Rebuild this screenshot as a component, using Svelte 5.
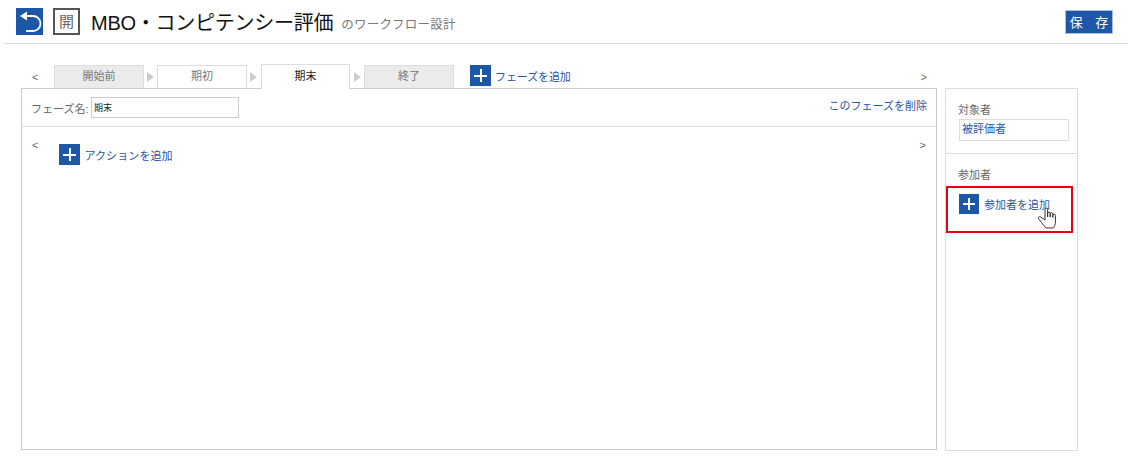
<script>
    const phases = [
        { name: "開始前", kind: "off" },
        { name: "期初", kind: "on" },
        { name: "期末", kind: "current" },
        { name: "終了", kind: "off" }
    ];
</script>

<div class="page">
    <header class="top">
        <button class="back" type="button" aria-label="戻る">
            <svg width="27" height="27" viewBox="0 0 27 27">
                <path d="M10 8 H17 A7.500 7.500 0 0 1 17 23 H10" fill="none" stroke="#fff" stroke-width="1.800" />
                <path d="M4 8 L11 3.500 V12.500 Z" fill="#fff" />
            </svg>
        </button>
        <span class="badge">開</span>
        <h1>MBO・コンピテンシー評価</h1>
        <span class="sub">のワークフロー設計</span>
        <button class="save" type="button">保 存</button>
    </header>

    <div class="work">
        <div class="left">
            <div class="tabbar">
                <span class="chev first">&lt;</span>
                {#each phases as p, i}
                    {#if i > 0}
                        <span class="sep"></span>
                    {/if}
                    <div class="tab {p.kind}">{p.name}</div>
                {/each}
                <button class="add add-phase" type="button">
                    <span class="plus big"></span>フェーズを追加
                </button>
                <span class="chev last">&gt;</span>
            </div>
            <div class="panel">
                <div class="phase-row">
                    <label for="phase">フェーズ名:</label>
                    <input id="phase" value="期末" />
                    <a href="#delete">このフェーズを削除</a>
                </div>
                <div class="actions">
                    <span class="chev">&lt;</span>
                    <button class="add add-action" type="button">
                        <span class="plus big"></span>アクションを追加
                    </button>
                    <span class="chev end">&gt;</span>
                </div>
            </div>
        </div>

        <aside class="side">
            <div class="target">
                <div class="lbl">対象者</div>
                <div class="box">被評価者</div>
            </div>
            <div class="members">
                <div class="lbl">参加者</div>
                <div class="mark">
                    <button class="add add-member" type="button">
                        <span class="plus"></span>参加者を追加
                    </button>
                    <svg class="hand" width="21" height="22" viewBox="0 0 21 22">
                        <path d="M8 13 V2.500 a1.300 1.300 0 0 1 2.600 0 V10 V6.500 a1.300 1.300 0 0 1 2.600 0 V10 V7 a1.300 1.300 0 0 1 2.600 0 V10.500 V8.500 a1.300 1.300 0 0 1 2.600 0 V15 c0 2.500 -1 4.500 -2 6 H9 c-1.500 -1.500 -3 -3.500 -4.500 -5.500 L1.500 11.500 c-0.800 -1.300 0.800 -2.500 2.200 -1.500 Z" fill="#fff" stroke="#333" stroke-width="1" stroke-linejoin="round" />
                    </svg>
                </div>
            </div>
        </aside>
    </div>
</div>

<style>
    :global(body) {
        background: #fff;
    }

    .page {
        width: 1128px;
        height: 460px;
        overflow: hidden;
        font-family: "Liberation Sans", "Noto Sans CJK JP", sans-serif;
        color: #666;
    }

    button {
        font-family: inherit;
        border: 0;
        padding: 0;
        background: none;
        cursor: pointer;
    }

    .top {
        display: flex;
        align-items: center;
        height: 43px;
        margin-left: 4px;
        padding: 0 15px 0 12px;
        border-bottom: 1px solid #ddd;
    }

    .back {
        width: 27px;
        height: 27px;
        background: #1c57a8;
    }

    .back svg {
        display: block;
    }

    .badge {
        width: 27px;
        height: 27px;
        box-sizing: border-box;
        border: 2px solid #555;
        margin: 0 11px 0 10px;
        font-size: 15px;
        line-height: 23px;
        text-align: center;
        color: #666;
    }

    h1 {
        margin: 0 8px 0 0;
        font-size: 20px;
        font-weight: 400;
        letter-spacing: -0.250px;
        color: #111;
        white-space: nowrap;
    }

    .sub {
        font-size: 12.500px;
        letter-spacing: 0.200px;
        margin-top: 3px;
        color: #777;
    }

    .save {
        margin-left: auto;
        width: 48px;
        height: 24px;
        box-sizing: border-box;
        border: 1px solid #a9c0e0;
        padding-left: 1px;
        background: #1c57a8;
        color: #fff;
        font-size: 13px;
        letter-spacing: 1px;
        word-spacing: 7px;
    }

    .work {
        display: flex;
        gap: 8px;
        margin: 21px 0 0 21px;
    }

    .left {
        width: 916px;
    }

    .tabbar {
        display: flex;
        align-items: flex-end;
        height: 23px;
        position: relative;
        z-index: 1;
    }

    .chev {
        font-size: 11px;
        color: #666;
    }

    .chev.first {
        width: 33px;
        padding-left: 11px;
        box-sizing: border-box;
        align-self: center;
    }

    .chev.last {
        margin-left: auto;
        margin-right: 10px;
        align-self: center;
    }

    .tab {
        width: 90px;
        height: 23px;
        box-sizing: border-box;
        border: 1px solid #ddd;
        border-bottom: 0;
        font-size: 11px;
        line-height: 21px;
        text-align: center;
        color: #777;
    }

    .tab.off {
        background: #ebebeb;
    }

    .tab.on {
        background: #fff;
    }

    .tab.current {
        background: #fff;
        width: 89px;
        height: 25px;
        margin: 0 1px -1px 1px;
        line-height: 23px;
        color: #222;
    }

    .sep {
        width: 13px;
        height: 23px;
        display: flex;
        align-items: center;
    }

    .sep::after {
        content: "";
        margin-left: 3px;
        border-left: 7px solid #ccc;
        border-top: 5px solid transparent;
        border-bottom: 5px solid transparent;
    }

    .add {
        display: flex;
        align-items: center;
        gap: 4px;
        color: #2a55a5;
        font-size: 11px;
        white-space: nowrap;
    }

    .plus {
        width: 20px;
        height: 20px;
        flex: none;
        background:
            linear-gradient(#fff, #fff) center / 12px 2px no-repeat,
            linear-gradient(#fff, #fff) center / 2px 12px no-repeat,
            #1c57a8;
    }

    .plus.big {
        width: 21px;
        height: 21px;
        background-size: 13px 2px, 2px 13px, auto;
    }

    .add-phase {
        margin: 0 0 2px 16px;
        letter-spacing: -0.100px;
    }

    .panel {
        height: 362px;
        box-sizing: border-box;
        border: 1px solid #ccc;
    }

    .phase-row {
        display: flex;
        align-items: center;
        height: 38px;
        box-sizing: border-box;
        border-bottom: 1px solid #ddd;
        padding: 0 9px;
        font-size: 11px;
    }

    .phase-row label {
        width: 60px;
        white-space: nowrap;
    }

    .phase-row input {
        width: 148px;
        height: 21px;
        box-sizing: border-box;
        border: 1px solid #ccc;
        padding: 0 2px;
        margin: 0;
        font: inherit;
        font-size: 9px;
        color: #222;
        outline: 0;
    }

    .phase-row a {
        margin: -6px 0 0 auto;
        color: #2a55a5;
        text-decoration: none;
    }

    .actions {
        display: flex;
        align-items: flex-start;
        padding: 12px 10px 0 10px;
    }

    .add-action {
        margin: 5px 0 0 21px;
        letter-spacing: 0.100px;
    }

    .chev.end {
        margin-left: auto;
    }

    .side {
        width: 133px;
        height: 363px;
        box-sizing: border-box;
        margin-top: 23px;
        border: 1px solid #ddd;
    }

    .target {
        height: 65px;
        box-sizing: border-box;
        border-bottom: 1px solid #ddd;
        padding: 14px 8px 0 12px;
    }

    .lbl {
        font-size: 11px;
        line-height: 14px;
        color: #666;
    }

    .box {
        height: 22px;
        box-sizing: border-box;
        border: 1px solid #ddd;
        margin: 2px 0 0 1px;
        padding-left: 2px;
        font-size: 11px;
        line-height: 18px;
        color: #2a55a5;
    }

    .members .lbl {
        margin: 14px 0 4px 12px;
    }

    .mark {
        position: relative;
        width: 127px;
        height: 47px;
        box-sizing: border-box;
        border: 2px solid #e60012;
        padding: 6px 0 0 11px;
    }

    .add-member {
        gap: 5px;
    }

    .hand {
        position: absolute;
        left: 89px;
        top: 19px;
    }
</style>
